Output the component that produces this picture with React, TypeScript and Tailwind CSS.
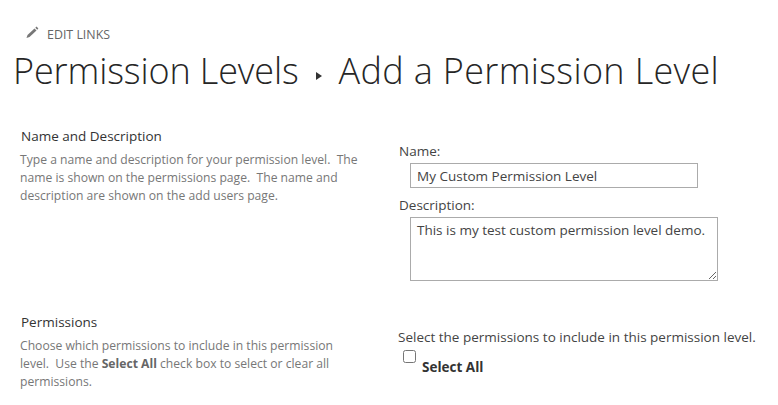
const font = "font-['Open_Sans','Noto_Sans',sans-serif]"

export default function App() {
  return (
    <div className={`w-[778px] h-[405px] overflow-hidden bg-white ${font}`}>
      <div className="pt-[26px] pl-[26px] flex items-center h-[44px]">
        <svg width="13" height="13" viewBox="0 0 13 13" className="mb-[5px]">
          <path d="M0.5 12 L1.5 9 L8.5 2.5 L10.5 4.5 L3.5 11 Z" fill="#777" />
          <path d="M9.3 1.8 L10.5 0.6 L12.4 2.5 L11.2 3.8 Z" fill="#777" />
        </svg>
        <span className="ml-[8px] text-[12.4px] leading-[16px] text-[#666]">EDIT LINKS</span>
      </div>
      <h1 className="pl-[13px] mt-[3px] flex items-center text-[36px] leading-[48px] font-light text-[#262626] whitespace-nowrap">
        <span className="tracking-[-0.12px]">Permission Levels</span>
        <span className="ml-[17px] mr-[17px] mt-[9px] w-0 h-0 border-y-[4px] border-y-transparent border-l-[6px] border-l-[#333]" />
        <span className="tracking-[0.33px]">Add a Permission Level</span>
      </h1>
      <div className="flex mt-[32px]">
        <div className="w-[378px] pl-[20px] shrink-0">
          <h3 className="text-[13.5px] leading-[18px] text-[#333] pl-px">Name and Description</h3>
          <p className="mt-[6px] w-[345px] text-[12.15px] leading-[18px] text-[#777]">
            Type a name and description for your permission level.&nbsp; The name is shown on the permissions page.&nbsp; The name and description are shown on the add users page.
          </p>
        </div>
        <div className="pl-[21px] pt-[15px] text-[13.5px] text-[#444]">
          <label className="block leading-[18px]">Name:</label>
          <input
            readOnly
            value="My Custom Permission Level"
            className="block mt-[3px] ml-[11px] w-[288px] h-[25px] px-[6px] border border-[#ababab] text-[13.5px] text-[#444] outline-none"
          />
          <label className="block mt-[8px] leading-[18px]">Description:</label>
          <textarea
            readOnly
            value="This is my test custom permission level demo."
            className="block mt-[3px] ml-[11px] w-[308px] h-[64px] px-[6px] pt-[3px] border border-[#ababab] text-[13.5px] leading-[18px] text-[#444] outline-none"
          />
        </div>
      </div>
      <div className="flex mt-[32px]">
        <div className="w-[378px] pl-[20px] shrink-0">
          <h3 className="text-[13.5px] leading-[18px] text-[#333] pl-px">Permissions</h3>
          <p className="mt-[6px] w-[325px] text-[12.15px] leading-[18px] text-[#777]">
            Choose which permissions to include in this permission level.&nbsp; Use the <b className="text-[#666]">Select All</b> check box to select or clear all permissions.
          </p>
        </div>
        <div className="pl-[20px] pt-[15px] text-[13.5px] text-[#444]">
          <div className="leading-[18px] whitespace-nowrap">Select the permissions to include in this permission level.</div>
          <div className="flex ml-[5px] mt-[4px]">
            <input type="checkbox" className="w-[13px] h-[13px]" />
            <span className="ml-[6px] mt-[8px] font-bold leading-[18px] text-[#333]">Select All</span>
          </div>
        </div>
      </div>
    </div>
  )
}
